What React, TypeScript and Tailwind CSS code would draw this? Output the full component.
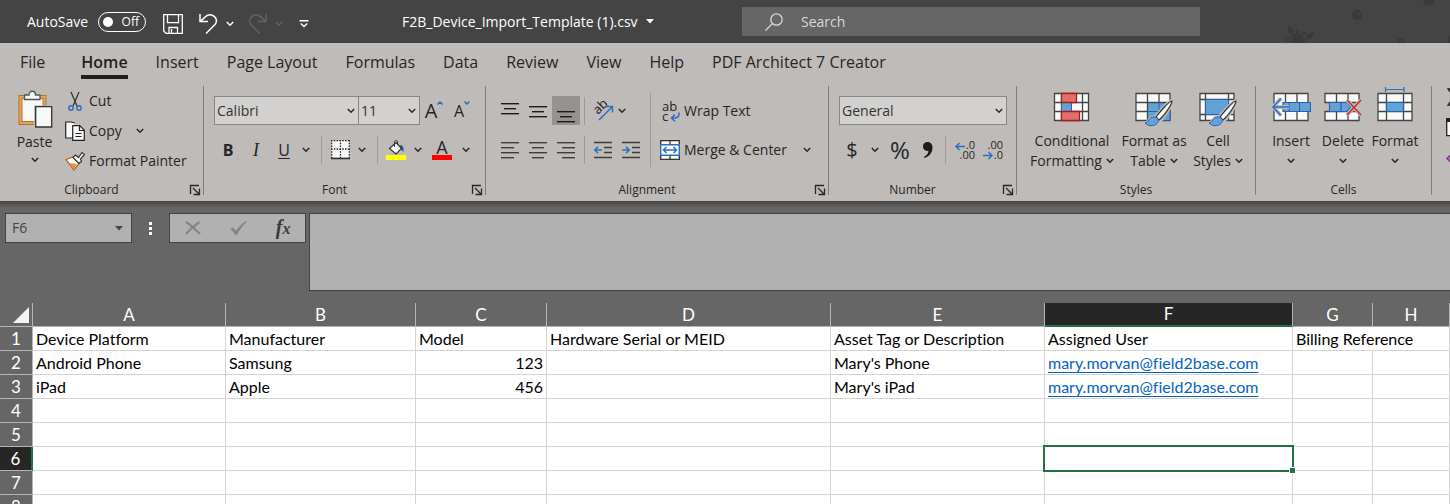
import React from 'react';

const tabs = ['File', 'Home', 'Insert', 'Page Layout', 'Formulas', 'Data', 'Review', 'View', 'Help', 'PDF Architect 7 Creator'];

const columns = [
  { name: 'A', width: 'w-[193px]' },
  { name: 'B', width: 'w-[190px]' },
  { name: 'C', width: 'w-[131px]' },
  { name: 'D', width: 'w-[284px]' },
  { name: 'E', width: 'w-[214px]' },
  { name: 'F', width: 'w-[248px]' },
  { name: 'G', width: 'w-20' },
  { name: 'H', width: '' },
];

const rows: string[][] = [
  ['Device Platform', 'Manufacturer', 'Model', 'Hardware Serial or MEID', 'Asset Tag or Description', 'Assigned User', 'Billing Reference'],
  ['Android Phone', 'Samsung', '123', '', "Mary's Phone", 'mary.morvan@field2base.com', '', ''],
  ['iPad', 'Apple', '456', '', "Mary's iPad", 'mary.morvan@field2base.com', '', ''],
  ['', '', '', '', '', '', '', ''],
  ['', '', '', '', '', '', '', ''],
  ['', '', '', '', '', '', '', ''],
  ['', '', '', '', '', '', '', ''],
  ['', '', '', '', '', '', '', ''],
];

const Chevron: React.FC<{ className?: string }> = ({ className = '' }) => (
  <svg width="8" height="6" viewBox="0 0 8 6" fill="none" stroke="currentColor" strokeWidth="1.5" className={`shrink-0 ${className}`}>
    <path d="M0.8 1l3.2 3.2L7.2 1" />
  </svg>
);

type ButtonProps = { label: string; className: string; children: React.ReactNode };

const ToolButton: React.FC<ButtonProps> = ({ label, className, children }) => (
  <button aria-label={label} className={`flex h-7 shrink-0 items-center justify-center ${className}`}>
    {children}
  </button>
);

const MenuButton: React.FC<{ label: string; className: string }> = ({ label, className }) => (
  <ToolButton label={label} className={className}>
    <Chevron />
  </ToolButton>
);

const Divider: React.FC<{ className: string }> = ({ className }) => (
  <div className={`flex h-7 shrink-0 justify-center ${className}`}>
    <div className="w-px bg-[#9c9997]" />
  </div>
);

const Group: React.FC<{ title: string; className: string; launcher?: boolean; children: React.ReactNode }> = ({ title, className, launcher, children }) => (
  <section className={`flex shrink-0 items-start ${className}`}>
    <div className="min-w-0 flex-1">
      <div className="h-24 pt-0.5">{children}</div>
      <div className="flex h-5 items-center text-xs">
        <h2 className="flex-1 text-center">{title}</h2>
        {launcher && (
          <button aria-label={`${title} settings`} className="flex w-5 items-center justify-end pr-0.5">
            <svg width="12" height="12" viewBox="0 0 12 12" fill="none" stroke="currentColor">
              <path d="M1.5 10V1.5H10M4 4l5 5M10.5 4.5v6h-6M10.5 10.5L8 8" strokeWidth="1.3" />
            </svg>
          </button>
        )}
      </div>
    </div>
    <div className="mt-0.5 h-[109px] w-px bg-[#7f7c7a]" />
  </section>
);

const Dropdown: React.FC<{ label: string; value: string; className: string }> = ({ label, value, className }) => (
  <label className={`relative flex h-[29px] items-center ${className}`}>
    <span className="sr-only">{label}</span>
    <select className="h-full w-full appearance-none rounded-none border border-[#898785] bg-[#d2d1cf] pl-0.5 text-sm text-[#333]">
      <option>{value}</option>
    </select>
    <Chevron className="pointer-events-none absolute right-1" />
  </label>
);

const Lines: React.FC<{ lines: number[][]; color?: string }> = ({ lines, color = '#3f3f3a' }) => (
  <svg width="18" height="20" viewBox="0 0 18 20" fill={color}>
    {lines.map(([x, y, w]) => (
      <rect key={y} x={x} y={y} width={w} height="1.4" />
    ))}
  </svg>
);

const Brush: React.FC = () => (
  <>
    <path d="M37 10c-3 0-13 12-17 17l4 3.500c4-4 13-16 13-20.500z" fill="#f7faf8" stroke="#c0bcb9" strokeWidth="4" />
    <path d="M10 32c4 0 3-6 9-6 4 0 6 4 3 6.500-3 3-9 3-12-.5z" fill="#62a3d6" stroke="#c0bcb9" strokeWidth="3" />
    <path d="M37 10c-3 0-13 12-16 16l3 3c4-3 13-15 13-19z" fill="#f7faf8" stroke="#333" strokeWidth="1.200" />
    <path d="M10 32c4 0 3-6 9-6 4 0 6 4 3 6.500-3 3-9 3-12-.5z" fill="#62a3d6" stroke="#2c5fb0" />
  </>
);

const PasteIcon = () => (
  <svg width="36" height="38" viewBox="0 0 36 38" fill="none">
    <path d="M3.500 7h24v26h-24z" fill="#f6f9f8" stroke="#b8722c" strokeWidth="4" />
    <path d="M3.500 7h24v26h-24z" stroke="#e3a458" strokeWidth="2" />
    <path d="M7.500 9.500V5H12c0-5 6.500-5 6.500 0H23v4.500z" fill="#f6f9f8" stroke="#555" strokeWidth="1.300" />
    <path d="M17 15.500h19V38H17z" fill="#c0bcb9" />
    <path d="M18.700 16.700h16V37h-16z" fill="#f6f9f8" stroke="#333" strokeWidth="1.300" />
  </svg>
);

const CutIcon = () => (
  <svg width="20" height="20" viewBox="0 0 20 20" fill="none">
    <path d="M6 1l6 14M14 1L8 15" stroke="#333" strokeWidth="1.300" />
    <circle cx="6" cy="17" r="2.200" stroke="#2f6cc0" strokeWidth="1.400" />
    <circle cx="14" cy="17" r="2.200" stroke="#2f6cc0" strokeWidth="1.400" />
  </svg>
);

const CopyIcon = () => (
  <svg width="20" height="20" viewBox="0 0 20 20" fill="#f6f9f8" stroke="#222" strokeWidth="1.200">
    <path d="M7 17H.7V1H6l4 1" />
    <path d="M7.700 4.700h7l4.600 4.600v10.100H7.700z" />
    <path d="M14.500 5v4.500H19M10.500 12.500h6M10.500 15.500h6" fill="none" />
  </svg>
);

const PainterIcon = () => (
  <svg width="20" height="20" viewBox="0 0 20 20">
    <path d="M1 8.500L8 6l6 6.500-5 6.500z" fill="#f6f9f8" stroke="#b35e17" strokeWidth="1.200" />
    <path d="M4.500 12l7.500 1-3 5.500z" fill="#e19545" />
    <path d="M8 6.500l2.500-2.500 3 2.500L17 1.500l2.500 2-4 4.500 1 2.500-2.500 2z" fill="#f6f9f8" stroke="#333" strokeWidth="1.200" />
  </svg>
);

const ConditionalIcon = () => (
  <svg width="38" height="38" viewBox="0 0 38 38" fill="#f7faf8" stroke="#444">
    <path d="M1.500 6.500h34v27h-34zM1.500 15.500h34M1.500 24.500h34M8.500 6.500v27M29.500 6.500v27" strokeWidth="1.300" />
    <path d="M8.500 15.500h10v9h-10z" fill="#62a3d6" stroke="#2c5fb0" />
    <path d="M8.500 6.500h15v9h-15zM8.500 24.500h18v9h-18z" fill="#e07070" stroke="#b01818" strokeWidth="1.300" />
  </svg>
);

const TableIcon = () => (
  <svg width="38" height="38" viewBox="0 0 38 38" fill="#f7faf8" stroke="#444" className="overflow-visible">
    <path d="M1 6.500h34v27H1z" strokeWidth="1.300" />
    <path d="M12.500 15.500H35v18H12.500z" fill="#62a3d6" stroke="#2c5fb0" />
    <path d="M1 15.500h34M1 24.500h11.500M12.500 6.500v27M24 6.500v9" strokeWidth="1.300" />
    <path d="M12.500 24.500H35M24 15.500v18" stroke="#2c5fb0" />
    <g transform="translate(0 4)">
      <Brush />
    </g>
  </svg>
);

const CellStylesIcon = () => (
  <svg width="38" height="38" viewBox="0 0 38 38" fill="#f7faf8" stroke="#444" className="overflow-visible">
    <path d="M1 6.500h34v27H1zM1 12.500h34M1 27.500h34M6.500 6.500v27M29.500 6.500v27" strokeWidth="1.300" />
    <path d="M6.500 12.500h23v15h-23z" fill="#62a3d6" stroke="#2c5fb0" />
    <g transform="translate(0 4)">
      <Brush />
    </g>
  </svg>
);

const InsertIcon = () => (
  <svg width="40" height="38" viewBox="0 0 40 38" fill="#f7faf8" stroke="#444">
    <path d="M3 6.500h34v27H3zM14.500 6.500v27M26 6.500v27" strokeWidth="1.300" />
    <path d="M12 15.500h27.500v9H12z" fill="#62a3d6" stroke="#2c5fb0" strokeWidth="1.200" />
    <path d="M18 15.500v9M28.500 15.500v9" stroke="#2c5fb0" />
    <path d="M18 20H2M10 11.500L2 20l8 8.500" fill="none" stroke="#c0bcb9" strokeWidth="4" />
    <path d="M18 20H2M10 11.500L2 20l8 8.500" fill="none" stroke="#2f6cc0" strokeWidth="1.500" />
  </svg>
);

const DeleteIcon = () => (
  <svg width="40" height="38" viewBox="0 0 40 38" fill="#f7faf8" stroke="#444">
    <path d="M2 6.500h34v9H2zM2 24.500h34v9H2zM13.500 6.500v9M25 6.500v9M13.500 24.500v9M25 24.500v9" strokeWidth="1.300" />
    <path d="M6.500 15.500H24l4 4.500-4 4.500H6.500zM18 15.500v9" fill="#62a3d6" stroke="#2c5fb0" strokeWidth="1.200" />
    <path d="M24 13l14 15M38 13L24 28" stroke="#c0bcb9" strokeWidth="4" />
    <path d="M24 13l14 15M38 13L24 28" stroke="#c9302c" strokeWidth="1.600" />
  </svg>
);

const FormatIcon = () => (
  <svg width="38" height="38" viewBox="0 0 38 38" fill="#f7faf8" stroke="#444">
    <path d="M2 6.500h34v27H2zM2 15.500h34M2 24.500h34M10.500 6.500v27M27.500 6.500v27" strokeWidth="1.300" />
    <path d="M10.500 15.500h17v9h-17z" fill="#62a3d6" stroke="#2c5fb0" strokeWidth="1.200" />
    <path d="M9.500 2.500h18.500M9.500 0v5M28 0v5" stroke="#2f6cc0" strokeWidth="1.200" />
  </svg>
);

const BigButton: React.FC<{ icon: React.ReactNode; lines: string[]; className: string }> = ({ icon, lines, className }) => (
  <button className={`flex h-[86px] shrink-0 flex-col items-center pt-px text-sm leading-5 whitespace-nowrap ${className}`}>
    {icon}
    <span className="mt-1.5">{lines[0]}</span>
    <span className="flex h-5 items-center gap-1">
      {lines[1]}
      <Chevron />
    </span>
  </button>
);

const TitleBar: React.FC = () => (
  <header className="relative flex h-[43px] shrink-0 items-center overflow-hidden bg-[#444] pl-[27px] text-sm text-white">
    <svg width="170" height="43" viewBox="-20 0 170 43" className="absolute top-0 right-0" fill="#3a3a3a">
      <circle cx="57" cy="15" r="5" />
      <circle cx="129" cy="0" r="6" />
      <circle cx="101" cy="42" r="4" />
      <ellipse cx="151" cy="42" rx="3" ry="7" />
      <circle cx="59" cy="14" r="1" fill="#4a4a4a" />
      <circle cx="102" cy="41" r="1" fill="#4a4a4a" />
      <path d="M-10 25c-3 3-3 7 1 8 3 0 3-3 2-5l-1.500 1zM14 31c0 5-1 7-5 8-3 0-3-3-1-5l3-1z" />
      <circle cx="-2.500" cy="31" r="2" />
      <circle cx="4" cy="33" r="2" />
      <ellipse cx="-2" cy="40" rx="6" ry="7" />
      <path d="M-9 33l5 6M8 38l-7 3M-7 39c-3-2-7-1-9 1M-7 41h-7M2 41l6 1M-2.500 32l1 4M4 34l-3 3" fill="none" stroke="#3a3a3a" strokeWidth="1.500" />
    </svg>
    <div className="flex w-[136px] shrink-0 items-center gap-2">
      <span className="w-[63px] whitespace-nowrap">AutoSave</span>
      <button role="switch" aria-checked="false" aria-label="AutoSave" className="flex h-5 w-12 items-center justify-between rounded-full border border-white pr-1.5 pl-1 text-xs">
        <span className="size-2.5 rounded-full bg-white" />
        Off
      </button>
    </div>
    <div className="flex w-[231px] shrink-0 items-center pt-1">
      <button aria-label="Save" className="mr-4">
        <svg width="20" height="20" viewBox="0 0 20 20" fill="none" stroke="white" strokeWidth="1.300">
          <path d="M.7.700h18.600v18.600H3l-2.300-2.300zM4.500.700v8h11v-8M6 19v-5.500h8.500V19M8.500 15v4" />
        </svg>
      </button>
      <button aria-label="Undo" className="mr-2">
        <svg width="19" height="20" viewBox="0 0 19 20" fill="none" stroke="white" strokeWidth="1.500">
          <path d="M1 0v7.500h8M1.500 7.200L6.500 2.600C12-2.500 21 4.500 16 10.500L7 19.500" />
        </svg>
      </button>
      <button aria-label="Undo list" className="mr-3.5"><Chevron /></button>
      <button aria-label="Redo" className="mr-2 text-[#636363]">
        <svg width="19" height="20" viewBox="0 0 19 20" fill="none" stroke="currentColor" strokeWidth="1.500">
          <path d="M18 0v7.500h-8M17.500 7.200L12.500 2.600C7-2.500-2 4.500 3 10.500l9 9" />
        </svg>
      </button>
      <button aria-label="Redo list" className="mr-4 text-[#636363]"><Chevron /></button>
      <button aria-label="Customize toolbar">
        <svg width="10" height="8" viewBox="0 0 10 8" fill="none" stroke="white" strokeWidth="1.400">
          <path d="M.5.700h9M1.800 3.500L5 6.500l3.200-3" />
        </svg>
      </button>
    </div>
    <button className="ml-2 flex w-[340px] shrink-0 items-center gap-2 text-sm whitespace-nowrap">
      F2B_Device_Import_Template (1).csv
      <svg width="8" height="5" viewBox="0 0 8 5" fill="white"><path d="M0 0h8L4 4.500z" /></svg>
    </button>
    <label className="relative mr-[250px] flex h-[29px] flex-1 items-center bg-[#666] pl-[23px]">
      <svg width="18" height="18" viewBox="0 0 18 18" fill="none" stroke="#d8d8d8" strokeWidth="1.300">
        <circle cx="11.500" cy="6.500" r="5.700" />
        <path d="M7.500 10.500L.5 17.500" />
      </svg>
      <input type="search" aria-label="Search" placeholder="Search" className="ml-[18px] min-w-0 flex-1 bg-transparent text-sm outline-none placeholder:text-[#d8d8d8]" />
    </label>
  </header>
);

const TabBar: React.FC = () => (
  <nav className="flex h-[41px] items-start gap-7 overflow-hidden pt-1.5 pl-5 text-base whitespace-nowrap">
    {tabs.map((tab) => (
      <a
        key={tab}
        href="#"
        className={`border-b-4 leading-[26px] ${tab === 'Home' ? 'ml-2 border-[#1f1f1f] font-semibold text-[#1f1f1f]' : 'border-transparent'}`}
      >
        {tab}
      </a>
    ))}
  </nav>
);

const ClipboardGroup: React.FC = () => (
  <Group title="Clipboard" className="w-[204px]" launcher>
    <div className="flex">
      <button className="flex w-[65px] flex-col items-center pt-1 pl-1 text-sm">
        <PasteIcon />
        <span className="mt-1 leading-5">Paste</span>
        <span className="flex h-4 items-center"><Chevron /></span>
      </button>
      <div className="text-sm">
        <button className="flex h-[30px] items-center gap-1"><CutIcon />Cut</button>
        <div className="flex h-[30px] items-center gap-3.5">
          <button className="flex items-center gap-1"><CopyIcon />Copy</button>
          <button aria-label="Copy options"><Chevron /></button>
        </div>
        <button className="flex h-[30px] items-center gap-1 whitespace-nowrap"><PainterIcon />Format Painter</button>
      </div>
    </div>
  </Group>
);

const FontGroup: React.FC = () => (
  <Group title="Font" className="w-[282px]" launcher>
    <div className="flex items-center pt-2.5 pl-2.5">
      <Dropdown label="Font name" value="Calibri" className="w-[145px]" />
      <Dropdown label="Font size" value="11" className="-ml-px w-[62px]" />
      <ToolButton label="Increase font size" className="w-7 text-xl">
        A
        <svg width="6" height="4" viewBox="0 0 6 4" fill="none" stroke="#2f6cc0" strokeWidth="1.500" className="mb-4"><path d="M.5 3.500L3 1l2.500 2.500" /></svg>
      </ToolButton>
      <ToolButton label="Decrease font size" className="w-7 text-base">
        A
        <svg width="6" height="4" viewBox="0 0 6 4" fill="none" stroke="#2f6cc0" strokeWidth="1.500" className="mb-4"><path d="M.5.500L3 3 5.500.500" /></svg>
      </ToolButton>
    </div>
    <div className="flex items-center pt-[11px] pl-2.5">
      <ToolButton label="Bold" className="w-7 text-base font-bold">B</ToolButton>
      <ToolButton label="Italic" className="w-7 font-['Liberation_Serif',serif] text-lg italic">I</ToolButton>
      <ToolButton label="Underline" className="w-7 text-base underline underline-offset-2">U</ToolButton>
      <MenuButton label="Underline options" className="w-4" />
      <Divider className="w-3.5" />
      <ToolButton label="Borders" className="w-6">
        <svg width="19" height="20" viewBox="0 0 19 20">
          <path d="M.5.500h18v17H.5z" fill="#f7faf8" />
          <path d="M.7 0v18M9.500 0v18M18.300 0v18M0 .700h19M0 9h19" stroke="#222" strokeWidth="1.300" strokeDasharray="1.500 1.300" />
          <path d="M0 18.500h19" stroke="#333" strokeWidth="1.600" />
        </svg>
      </ToolButton>
      <MenuButton label="Border options" className="w-5" />
      <Divider className="w-2.5" />
      <ToolButton label="Fill color" className="w-7">
        <svg width="20" height="20" viewBox="0 0 20 20">
          <path d="M13.500 5.500c3-1 4.500 1.500 4 6.500l-3-3" fill="#2f55a0" />
          <path d="M3.500 8.500L10 2.500l5.500 6L10 14z" fill="#f7faf8" stroke="#333" strokeWidth="1.200" />
          <path d="M8.500 7V2.500c0-3 3-3 3-.5v2" fill="none" stroke="#333" />
          <path d="M0 15h20v5H0z" fill="#ffff00" />
        </svg>
      </ToolButton>
      <MenuButton label="Fill color options" className="w-4" />
      <ToolButton label="Font color" className="w-8">
        <span className="h-5 w-5 border-b-[5px] border-[#f00] text-lg leading-[14px]">A</span>
      </ToolButton>
      <MenuButton label="Font color options" className="w-4" />
    </div>
  </Group>
);

const AlignmentGroup: React.FC = () => (
  <Group title="Alignment" className="w-[343px]" launcher>
    <div className="flex text-sm">
      <div className="w-[159px] pl-2.5">
        <div className="flex items-center pt-2.5">
          <ToolButton label="Top align" className="w-7"><Lines color="#1c1c1c" lines={[[0, 2, 18], [3, 7, 12], [0, 12, 18]]} /></ToolButton>
          <ToolButton label="Middle align" className="w-7"><Lines color="#1c1c1c" lines={[[0, 5, 18], [3, 10, 12], [0, 15, 18]]} /></ToolButton>
          <div className="bg-[#959391] pt-px">
            <ToolButton label="Bottom align" className="w-7 pt-2"><Lines color="#1c1c1c" lines={[[0, 6, 18], [3, 11, 12], [0, 16, 18]]} /></ToolButton>
          </div>
          <Divider className="w-[9px]" />
          <ToolButton label="Orientation" className="w-7">
            <svg width="22" height="22" viewBox="0 0 22 22" fill="none" className="overflow-visible">
              <text x="6" y="15" fontSize="13" fill="#222" transform="rotate(-45 6 15)">ab</text>
              <path d="M7 20L20 7M14.500 6.500H20.500V12.500" stroke="#2f6cc0" strokeWidth="1.500" />
            </svg>
          </ToolButton>
          <MenuButton label="Orientation options" className="w-2.5" />
        </div>
        <div className="flex items-center pt-[11px]">
          <ToolButton label="Align left" className="w-7"><Lines lines={[[0, 2, 18], [0, 7, 13], [0, 12, 18], [0, 17, 13]]} /></ToolButton>
          <ToolButton label="Center" className="w-7"><Lines lines={[[0, 2, 18], [3, 7, 12], [0, 12, 18], [3, 17, 12]]} /></ToolButton>
          <ToolButton label="Align right" className="w-7"><Lines lines={[[0, 2, 18], [5, 7, 13], [0, 12, 18], [5, 17, 13]]} /></ToolButton>
          <Divider className="w-[9px]" />
          <ToolButton label="Decrease indent" className="w-7">
            <svg width="18" height="20" viewBox="0 0 18 20" fill="none" stroke="#3f3f3a" strokeWidth="1.400">
              <path d="M0 2.500h18M10 7.500h8M10 12.500h8M0 17.500h18" />
              <path d="M8 10H1M4 6.800L.8 10 4 13.200" stroke="#2f6cc0" strokeWidth="1.600" />
            </svg>
          </ToolButton>
          <ToolButton label="Increase indent" className="w-7">
            <svg width="18" height="20" viewBox="0 0 18 20" fill="none" stroke="#3f3f3a" strokeWidth="1.400">
              <path d="M0 2.500h18M10 7.500h8M10 12.500h8M0 17.500h18" />
              <path d="M0 10h7M4 6.800L7.200 10 4 13.200" stroke="#2f6cc0" strokeWidth="1.600" />
            </svg>
          </ToolButton>
        </div>
      </div>
      <div className="mt-[7px] ml-[5px] h-[74px] w-px bg-[#9c9997]" />
      <div className="flex-1 pl-[9px]">
        <button className="mt-2.5 flex h-[29px] items-center gap-1">
          <span className="relative flex w-5 flex-col pl-0.5 text-left text-[13px] leading-[10px]">
            <span>ab</span>
            <span>c</span>
            <svg width="10" height="11" viewBox="0 0 10 11" fill="none" className="absolute right-0 -bottom-0.5">
              <path d="M9 .5V2c0 3-2 4-5 4H1.500M5 2.500L1.500 6 5 9.500" stroke="#2f6cc0" strokeWidth="1.500" />
            </svg>
          </span>
          Wrap Text
        </button>
        <div className="mt-[11px] flex h-7 items-center gap-4 whitespace-nowrap">
          <button className="flex items-center gap-1">
            <svg width="20" height="20" viewBox="0 0 20 20" fill="#f7faf8">
              <path d="M.7.700h18.600v18.600H.7zM10 .7v18.600" stroke="#333" strokeWidth="1.300" />
              <path d="M.7 4.700h18.600v10.600H.7z" stroke="#2f6cc0" strokeWidth="1.400" />
              <path d="M3.500 10h13M6.500 7l-3 3 3 3M13.500 7l3 3-3 3" fill="none" stroke="#2f6cc0" strokeWidth="1.500" />
            </svg>
            Merge &amp; Center
          </button>
          <button aria-label="Merge options"><Chevron /></button>
        </div>
      </div>
    </div>
  </Group>
);

const NumberGroup: React.FC = () => (
  <Group title="Number" className="w-[188px]" launcher>
    <div className="pt-2.5 pl-2.5">
      <Dropdown label="Number format" value="General" className="w-[168px]" />
    </div>
    <div className="flex items-center pt-[11px] pl-[9px]">
      <ToolButton label="Currency" className="w-7 text-xl">$</ToolButton>
      <MenuButton label="Currency options" className="w-[18px]" />
      <ToolButton label="Percent" className="w-8 text-2xl leading-7">%</ToolButton>
      <ToolButton label="Comma style" className="w-6">
        <svg width="10" height="16" viewBox="0 0 10 16"><path d="M0 4.500C0 1.500 2 0 4.500 0 8 0 9.500 2.500 9.500 5.500 9.500 11 6 14.500 1.500 16l-.5-1.200c3-1.500 4.300-3.500 4.500-6C2.500 9.500 0 7.500 0 4.500z" fill="#1c1c1c" /></svg>
      </ToolButton>
      <Divider className="w-[11px]" />
      <ToolButton label="Increase decimal" className="w-7">
        <span className="relative w-5 text-right text-[11px] leading-[10px]">
          .0<br />.00
          <svg width="10" height="9" viewBox="0 0 10 9" fill="none" className="absolute top-0.5 left-0">
            <path d="M10 4.500H1M4.500 1L1 4.500 4.500 8" stroke="#2f6cc0" strokeWidth="1.500" />
          </svg>
        </span>
      </ToolButton>
      <ToolButton label="Decrease decimal" className="w-7">
        <span className="relative w-5 text-right text-[11px] leading-[10px]">
          .00<br />.0
          <svg width="10" height="9" viewBox="0 0 10 9" fill="none" className="absolute bottom-0 left-0">
            <path d="M0 4.500h9M5.500 1L9 4.500 5.500 8" stroke="#2f6cc0" strokeWidth="1.500" />
          </svg>
        </span>
      </ToolButton>
    </div>
  </Group>
);

const Ribbon: React.FC = () => (
  <div className="flex h-[117px] overflow-hidden">
    <ClipboardGroup />
    <FontGroup />
    <AlignmentGroup />
    <NumberGroup />
    <Group title="Styles" className="w-[239px]">
      <div className="flex pl-2">
        <BigButton icon={<ConditionalIcon />} lines={['Conditional', 'Formatting']} className="w-[94px]" />
        <BigButton icon={<TableIcon />} lines={['Format as', 'Table']} className="w-[70px]" />
        <BigButton icon={<CellStylesIcon />} lines={['Cell', 'Styles']} className="w-[58px]" />
      </div>
    </Group>
    <Group title="Cells" className="w-[176px]">
      <div className="flex pl-[9px]">
        <BigButton icon={<InsertIcon />} lines={['Insert']} className="w-[52px]" />
        <BigButton icon={<DeleteIcon />} lines={['Delete']} className="w-[52px]" />
        <BigButton icon={<FormatIcon />} lines={['Format']} className="w-[52px]" />
      </div>
    </Group>
    <div className="min-w-0 flex-1 overflow-hidden pt-1 pl-3.5">
      <svg width="20" height="80" viewBox="0 0 20 80" fill="none" stroke="#222" strokeWidth="1.300">
        <path d="M14 1H2l6 8-6 8h12" />
        <path d="M.7 30.700h18v17H.7z" fill="#f7faf8" />
        <path d="M.7 32.500h18" strokeWidth="3" />
        <path d="M1 70.500l7-7 7 7-7 7z" fill="#c76fd0" stroke="#8a2a95" />
      </svg>
    </div>
  </div>
);

const FormulaBar: React.FC = () => (
  <div className="flex h-[102px] shrink-0 items-start bg-[#666] bg-linear-to-b from-[#444] to-[#666] to-[7px] pt-3 pl-[5px]">
    <div className="flex h-[30px] w-[127px] shrink-0 items-center border border-[#444] bg-[#b1b1b1] pr-2 text-[#444]">
      <input aria-label="Name box" defaultValue="F6" className="min-w-0 flex-1 bg-transparent pl-1.5 text-sm outline-none" />
      <svg width="8" height="5" viewBox="0 0 8 5" fill="currentColor"><path d="M0 0h8L4 4.500z" /></svg>
    </div>
    <div className="flex h-[30px] w-[37px] shrink-0 flex-col items-center justify-center gap-0.5">
      <span className="size-[3px] bg-white" />
      <span className="size-[3px] bg-white" />
      <span className="size-[3px] bg-white" />
    </div>
    <div className="flex h-[30px] w-[137px] shrink-0 items-center justify-around border border-[#444] bg-[#b1b1b1] text-[#858585]">
      <button aria-label="Cancel">
        <svg width="16" height="14" viewBox="0 0 16 14" fill="none" stroke="currentColor" strokeWidth="2.200"><path d="M1 1c5 3 9 7 14 12M14.500 1C10 4 5 8 1 13" /></svg>
      </button>
      <button aria-label="Enter">
        <svg width="17" height="14" viewBox="0 0 17 14" fill="currentColor"><path d="M0 8l2.500-1.500L6 9.500C9 5.500 12 2.500 16 0l1 .7C12.500 4.500 9.500 9 7 14H5.500C4 11.500 2 9.500 0 8z" /></svg>
      </button>
      <button aria-label="Insert function" className="font-['Liberation_Serif',serif] text-xl leading-6 font-bold text-[#3b3b3b] italic">
        f<span className="text-base">x</span>
      </button>
    </div>
    <textarea aria-label="Formula" className="ml-[3px] h-[78px] min-w-0 flex-1 resize-none border border-r-0 border-[#444] bg-[#b1b1b1] outline-none" />
  </div>
);

const Sheet: React.FC = () => (
  <table className="w-full table-fixed border-separate border-spacing-0 bg-white font-['Lato',sans-serif] text-base text-black [font-variant-ligatures:none]">
    <thead>
      <tr className="h-6 bg-[#666] text-white">
        <th aria-label="Select all" className="w-[33px] border-r border-b border-[#b5b5b5] p-0">
          <svg width="16" height="16" viewBox="0 0 16 16" className="ml-[13px]" fill="#f3f3f3"><path d="M16 0v16H0z" /></svg>
        </th>
        {columns.map(({ name, width }) => (
          <th
            key={name}
            scope="col"
            className={`border-r p-0 text-[17px] leading-[22px] font-normal ${width} ${
              name === 'F' ? 'border-b-2 border-r-[#b5b5b5] border-b-[#217346] bg-[#262626]' : 'border-b border-[#b5b5b5]'
            }`}
          >
            {name}
          </th>
        ))}
      </tr>
    </thead>
    <tbody>
      {rows.map((cells, r) => (
        <tr key={r} className="h-6">
          <th
            scope="row"
            className={`p-0 text-[17px] leading-[23px] font-normal text-white ${
              r === 5 ? 'border-r-2 border-b border-r-[#217346] border-b-[#b5b5b5] bg-[#262626]' : 'border-r border-b border-[#b5b5b5] bg-[#666]'
            }`}
          >
            {r + 1}
          </th>
          {cells.map((cell, c) => (
            <td
              key={c}
              colSpan={r === 0 && c === 6 ? 2 : 1}
              className={`relative border-r border-b border-[#d4d4d4] px-[3px] py-0 leading-[23px] whitespace-nowrap ${c === 2 && r > 0 ? 'text-right' : ''}`}
            >
              {cell.includes('@') ? <a href={`mailto:${cell}`} className="text-[#0563c1] underline underline-offset-3">{cell}</a> : cell}
              {r === 5 && c === 5 && (
                <>
                  <div className="absolute -inset-0.5 z-10 border-2 border-[#217346]" />
                  <div className="absolute -right-1 -bottom-1 z-20 size-[7px] border border-white bg-[#217346]" />
                </>
              )}
            </td>
          ))}
        </tr>
      ))}
    </tbody>
  </table>
);

const App: React.FC = () => (
  <div className="flex h-screen flex-col overflow-hidden bg-white font-['Open_Sans','Noto_Sans',sans-serif] text-[#262626]">
    <TitleBar />
    <div className="shrink-0 bg-[#bfbbb8]">
      <TabBar />
      <Ribbon />
    </div>
    <FormulaBar />
    <Sheet />
  </div>
);

export default App;
